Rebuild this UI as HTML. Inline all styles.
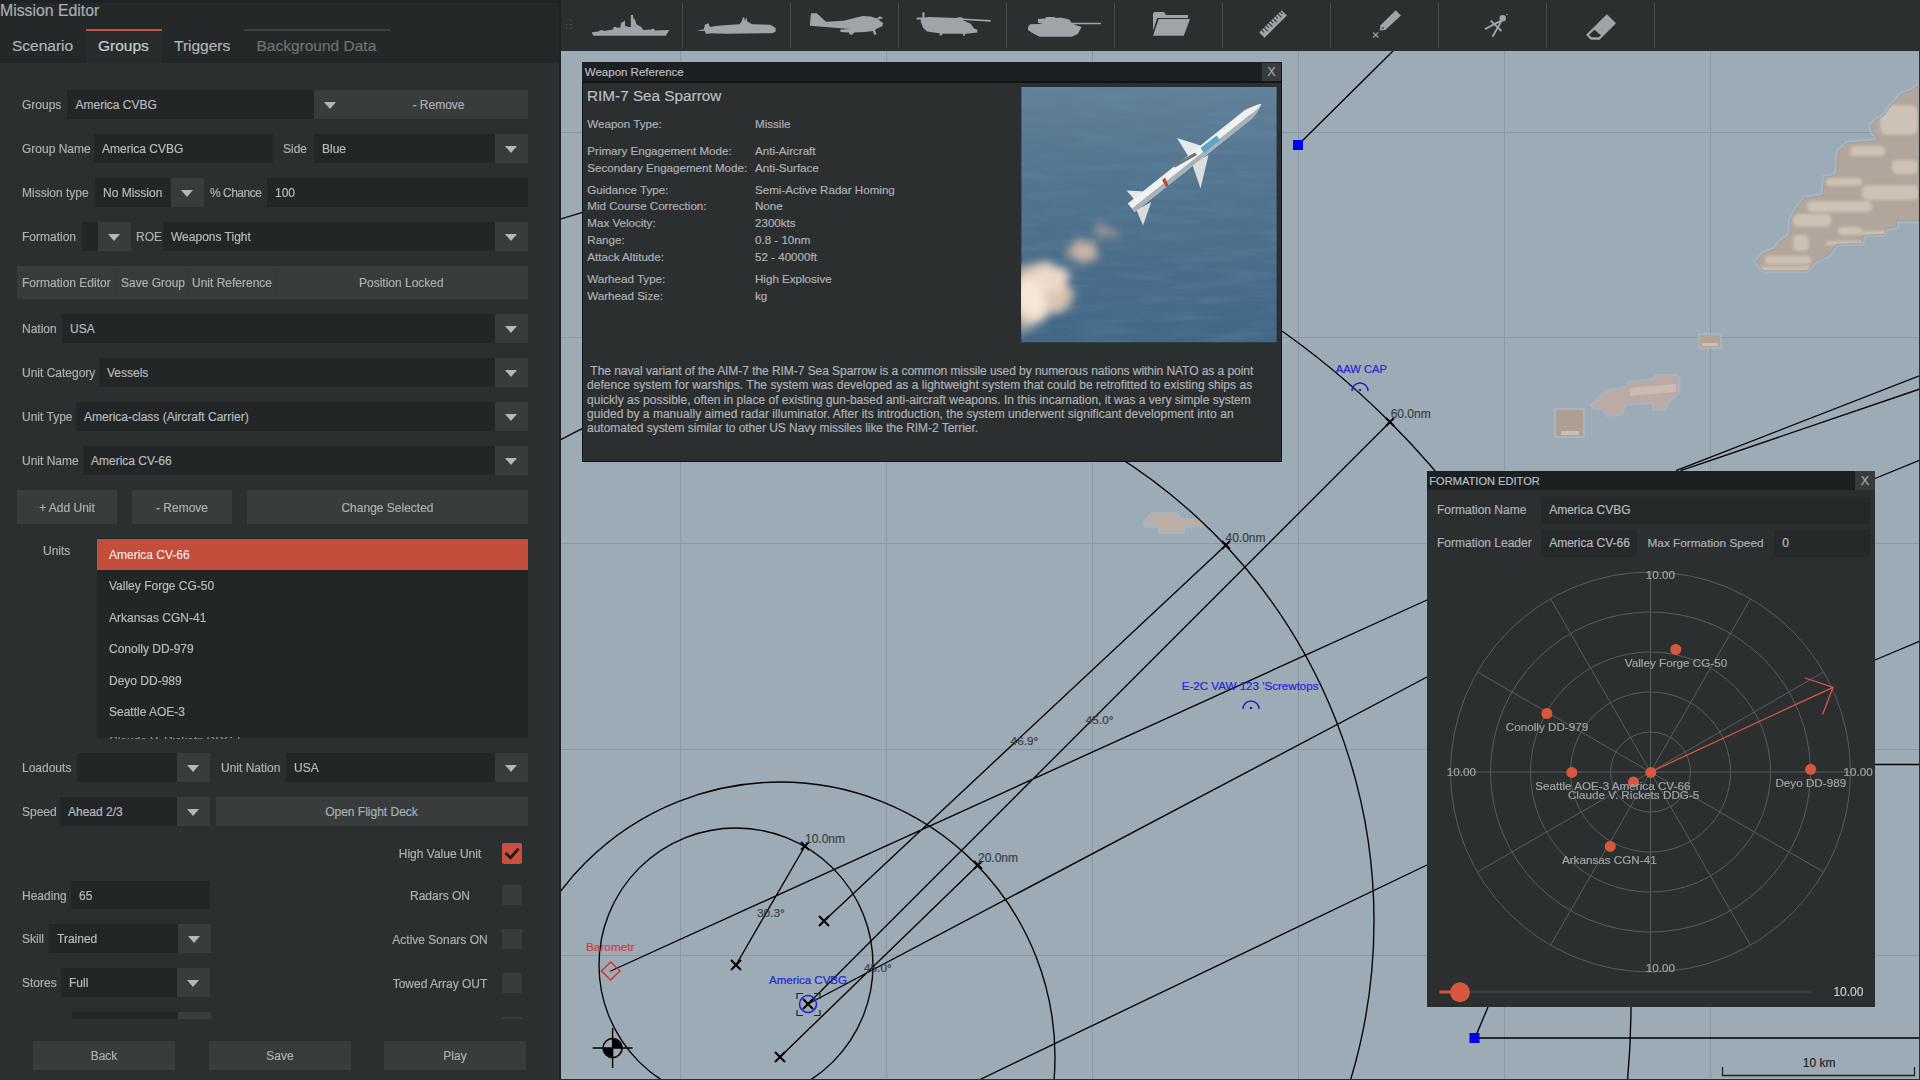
<!DOCTYPE html>
<html><head><meta charset="utf-8">
<style>
*{margin:0;padding:0;box-sizing:border-box}
html,body{width:1920px;height:1080px;overflow:hidden;background:#9dabb7;font-family:"Liberation Sans",sans-serif}
.a{position:absolute}
#left{position:absolute;left:0;top:0;width:561px;height:1080px;background:#2b2f30}
#hdr{position:absolute;left:0;top:0;width:560px;height:63px;background:linear-gradient(#1f2224 0,#1f2224 2.5px,#242829 3px,#242829 58px,#222627 60px,#222627 63px)}
.t{position:absolute;white-space:nowrap;color:#abafb2;font-size:12px;-webkit-text-stroke:0.2px currentColor}
.in{position:absolute;background:#232627}
.bt{position:absolute;background:#383c3d}
.arr{position:absolute;width:0;height:0;border-left:6.5px solid transparent;border-right:6.5px solid transparent;border-top:7px solid #b3b7ba}
#map{position:absolute;left:561px;top:51px;width:1359px;height:1029px;background:#9dabb7;overflow:hidden}
#tb{position:absolute;left:561px;top:0;width:1359px;height:51px;background:#2b2f30}
.sep{position:absolute;top:3px;width:1px;height:44px;background:#43474a}

</style></head><body>
<div id="map"><svg class="a" style="left:-561px;top:-51px" width="1920" height="1080" viewBox="0 0 1920 1080">
<defs><radialGradient id="g1"><stop offset="0" stop-color="#a3b0bc" stop-opacity="0.8"/><stop offset="1" stop-color="#a3b0bc" stop-opacity="0"/></radialGradient><radialGradient id="g2"><stop offset="0" stop-color="#95a3b0" stop-opacity="0.7"/><stop offset="1" stop-color="#95a3b0" stop-opacity="0"/></radialGradient></defs>
<path d="M680.5 51V1080 M886.5 51V1080 M1092.5 51V1080 M1298.5 51V1080 M1504.5 51V1080 M1710.5 51V1080 M561 132.5H1920 M561 337.5H1920 M561 543.5H1920 M561 749.5H1920 M561 955.5H1920" stroke="#8b98a4" stroke-width="1" fill="none"/>
<polygon points="1918,85.6 1910.6,91.1 1901.3,93.9 1894.8,102.2 1889.3,107.8 1884.6,115.2 1874.4,121.7 1871.7,124.4 1871.7,131.9 1876.3,135.6 1877.2,141.1 1847.6,143 1838.3,151.3 1836.5,175.4 1824.3,177.1 1823.3,195.5 1805,198 1797.9,206.7 1790.7,219.9 1789.7,235.2 1780.5,241.3 1774.4,249.4 1763.2,253.5 1756.1,261.6 1763.2,270.8 1807,270.8 1815.2,261.6 1828.4,255.5 1836.6,244.3 1862,243.3 1863,235.2 1884.4,234.2 1886.5,228 1896.6,227 1896.6,220.9 1919,220.9" fill="none" stroke="#a6b9cb" stroke-width="5" stroke-linejoin="round" opacity="0.75"/>
<polygon points="1918,85.6 1910.6,91.1 1901.3,93.9 1894.8,102.2 1889.3,107.8 1884.6,115.2 1874.4,121.7 1871.7,124.4 1871.7,131.9 1876.3,135.6 1877.2,141.1 1847.6,143 1838.3,151.3 1836.5,175.4 1824.3,177.1 1823.3,195.5 1805,198 1797.9,206.7 1790.7,219.9 1789.7,235.2 1780.5,241.3 1774.4,249.4 1763.2,253.5 1756.1,261.6 1763.2,270.8 1807,270.8 1815.2,261.6 1828.4,255.5 1836.6,244.3 1862,243.3 1863,235.2 1884.4,234.2 1886.5,228 1896.6,227 1896.6,220.9 1919,220.9" fill="#b2a69c"/>
<clipPath id="bigclip"><polygon points="1918,85.6 1910.6,91.1 1901.3,93.9 1894.8,102.2 1889.3,107.8 1884.6,115.2 1874.4,121.7 1871.7,124.4 1871.7,131.9 1876.3,135.6 1877.2,141.1 1847.6,143 1838.3,151.3 1836.5,175.4 1824.3,177.1 1823.3,195.5 1805,198 1797.9,206.7 1790.7,219.9 1789.7,235.2 1780.5,241.3 1774.4,249.4 1763.2,253.5 1756.1,261.6 1763.2,270.8 1807,270.8 1815.2,261.6 1828.4,255.5 1836.6,244.3 1862,243.3 1863,235.2 1884.4,234.2 1886.5,228 1896.6,227 1896.6,220.9 1919,220.9"/></clipPath><filter id="ib" x="-10%" y="-10%" width="120%" height="120%"><feGaussianBlur stdDeviation="1.6"/></filter>
<g clip-path="url(#bigclip)"><g filter="url(#ib)" fill="#cec1b6"><rect x="1807" y="201" width="65" height="11" rx="5"/><rect x="1793" y="214" width="38" height="13" rx="5"/><rect x="1838" y="227" width="24" height="8" rx="4"/><rect x="1765" y="256" width="46" height="8" rx="3"/><rect x="1760" y="266.5" width="50" height="5"/><rect x="1793" y="235" width="16" height="16" rx="5"/><rect x="1862" y="185" width="57" height="15" rx="6"/><rect x="1826" y="178" width="36" height="8" rx="4"/><rect x="1880" y="105" width="38" height="30" rx="8"/><rect x="1850" y="146" width="35" height="10" rx="4"/><rect x="1892" y="160" width="26" height="14" rx="5"/><rect x="1826" y="241" width="40" height="4"/><rect x="1862" y="231" width="34" height="5"/></g></g>
<polygon points="1918,85.6 1910.6,91.1 1901.3,93.9 1894.8,102.2 1889.3,107.8 1884.6,115.2 1874.4,121.7 1871.7,124.4 1871.7,131.9 1876.3,135.6 1877.2,141.1 1847.6,143 1838.3,151.3 1836.5,175.4 1824.3,177.1 1823.3,195.5 1805,198 1797.9,206.7 1790.7,219.9 1789.7,235.2 1780.5,241.3 1774.4,249.4 1763.2,253.5 1756.1,261.6 1763.2,270.8 1807,270.8 1815.2,261.6 1828.4,255.5 1836.6,244.3 1862,243.3 1863,235.2 1884.4,234.2 1886.5,228 1896.6,227 1896.6,220.9 1919,220.9" fill="none" stroke="#9f9289" stroke-width="1" opacity="0.6"/>
<polygon points="1591.7,405.4 1607.4,391 1627.8,387.4 1629,382.6 1653,380 1656.7,376 1676,376 1678.4,379 1678.4,392.2 1667.6,401.8 1665,409 1654.3,409 1653,401.8 1624,404 1621.8,413.9 1607.4,415 1603.8,409 1594,407.8" fill="#bcaaa4" stroke="#a9b9c8" stroke-width="4" stroke-linejoin="miter" stroke-opacity="0.7"/><polygon points="1591.7,405.4 1607.4,391 1627.8,387.4 1629,382.6 1653,380 1656.7,376 1676,376 1678.4,379 1678.4,392.2 1667.6,401.8 1665,409 1654.3,409 1653,401.8 1624,404 1621.8,413.9 1607.4,415 1603.8,409 1594,407.8" fill="#bcaaa4"/>
<path d="M1630 388 L1676 384 L1676 392 L1630 396Z" fill="#d7c3bd" opacity="0.6"/>
<polygon points="1556,410 1583,410 1583,436 1556,436" fill="#ad9f92" stroke="#a9b9c8" stroke-width="4" stroke-linejoin="miter" stroke-opacity="0.7"/><polygon points="1556,410 1583,410 1583,436 1556,436" fill="#ad9f92"/>
<rect x="1561" y="431" width="18" height="4" fill="#cdbeaf"/>
<polygon points="1700,335 1720,335 1720,347 1700,347" fill="#b3a596" stroke="#a9b9c8" stroke-width="4" stroke-linejoin="miter" stroke-opacity="0.7"/><polygon points="1700,335 1720,335 1720,347 1700,347" fill="#b3a596"/>
<rect x="1702" y="343" width="16" height="3" fill="#cdbeaf"/>
<polygon points="1152,514 1176,514 1179.2,519.7 1201.3,520.6 1201.7,525.3 1183.4,526.3 1183,531.9 1160,531.9 1159.5,526.3 1145.5,525.3 1144.5,522.5" fill="#bcaea3" stroke="#a9b9c8" stroke-width="4" stroke-linejoin="miter" stroke-opacity="0.7"/><polygon points="1152,514 1176,514 1179.2,519.7 1201.3,520.6 1201.7,525.3 1183.4,526.3 1183,531.9 1160,531.9 1159.5,526.3 1145.5,525.3 1144.5,522.5" fill="#bcaea3"/>
<circle cx="736" cy="965" r="137" fill="none" stroke="#000" stroke-width="1.35"/>
<circle cx="780" cy="1057" r="275" fill="none" stroke="#000" stroke-width="1.35"/>
<circle cx="825" cy="921" r="549" fill="none" stroke="#000" stroke-width="1.35"/>
<circle cx="808" cy="1004" r="823" fill="none" stroke="#000" stroke-width="1.35"/>
<path d="M736 965L805 846 M824 921L1226 545 M780 1057L978 865 M808 1004L1390 422 M610.7 971L1427 600 M808 1004L1427 677 M979 1080L1427 865 M1676 470.6L1920 375.6 M1680.6 470.6L1920 389 M1875 478.5L1920 460 M1875 660L1920 641 M1875 764.5L1920 764.5 M1298 145L1393 51 M1475 1038L1920 1038 M1475 1038L1488 1007" stroke="#000" stroke-width="1.35" fill="none"/>
<path d="M731 960L741 970M741 960L731 970" stroke="#000" stroke-width="2"/>
<path d="M819 916L829 926M829 916L819 926" stroke="#000" stroke-width="2"/>
<path d="M775 1052L785 1062M785 1052L775 1062" stroke="#000" stroke-width="2"/>
<path d="M803 999L813 1009M813 999L803 1009" stroke="#000" stroke-width="2"/>
<path d="M801 842L809 850M809 842L801 850" stroke="#000" stroke-width="1.8"/>
<path d="M974 861L982 869M982 861L974 869" stroke="#000" stroke-width="1.8"/>
<path d="M1222 541L1230 549M1230 541L1222 549" stroke="#000" stroke-width="1.8"/>
<path d="M1386 418L1394 426M1394 418L1386 426" stroke="#000" stroke-width="1.8"/>
<rect x="1293" y="140" width="10" height="10" fill="#0000ee"/>
<rect x="1469.5" y="1033" width="10" height="10" fill="#0000ee"/>
<circle cx="808" cy="1004" r="8.5" fill="none" stroke="#1f1fd0" stroke-width="1.5"/>
<path d="M797 999V993.5H803M814 993.5H820V999M820 1010V1015.5H814M803 1015.5H797V1010" stroke="#1c2530" stroke-width="1.2" fill="none"/>
<path d="M610.7 962L620 971L610.7 980L601.4 971Z" fill="none" stroke="#d03030" stroke-width="1.4"/>
<circle cx="610.7" cy="971" r="1.2" fill="#d03030"/>
<circle cx="612.6" cy="1048" r="9.5" fill="none" stroke="#000" stroke-width="1.6"/>
<path d="M612.6 1048V1039A9 9 0 0 1 621.6 1048Z M612.6 1048V1057A9 9 0 0 1 603.6 1048Z" fill="#000"/>
<path d="M592.6 1048H632.6M612.6 1028V1068" stroke="#000" stroke-width="1.4"/>
<path d="M1352 391A8 8 0 0 1 1368 391" fill="none" stroke="#1f1fd0" stroke-width="1.5"/><circle cx="1360" cy="390" r="1.2" fill="#1f1fd0"/>
<path d="M1243 709A8 8 0 0 1 1259 709" fill="none" stroke="#1f1fd0" stroke-width="1.5"/><circle cx="1251" cy="708" r="1.3" fill="#1f1fd0"/>
<path d="M1722.5 1067V1075.5H1914.5V1067" stroke="#222" stroke-width="1.3" fill="none"/>
</svg>
<div class="t" style="left:244px;top:780px;height:16px;line-height:16px;font-size:12px;color:#3b4045">10.0nm</div>
<div class="t" style="left:417px;top:799px;height:16px;line-height:16px;font-size:12px;color:#3b4045">20.0nm</div>
<div class="t" style="left:664.5px;top:479px;height:16px;line-height:16px;font-size:12px;color:#3b4045">40.0nm</div>
<div class="t" style="left:829.7px;top:355px;height:16px;line-height:16px;font-size:12px;color:#3b4045">60.0nm</div>
<div class="t" style="left:196px;top:854px;height:16px;line-height:16px;font-size:11.8px;color:#3b4045">30.3°</div>
<div class="t" style="left:449.6px;top:682px;height:16px;line-height:16px;font-size:11.8px;color:#3b4045">46.9°</div>
<div class="t" style="left:524.8px;top:661px;height:16px;line-height:16px;font-size:11.8px;color:#3b4045">45.0°</div>
<div class="t" style="left:303px;top:909px;height:16px;line-height:16px;font-size:11.8px;color:#3b4045">45.0°</div>
<div class="t" style="left:620.7px;top:627px;height:16px;line-height:16px;font-size:11.6px;color:#2424d8">E-2C VAW 123 'Screwtops'</div>
<div class="t" style="left:208px;top:921px;height:16px;line-height:16px;font-size:11.5px;color:#2424d8">America CVBG</div>
<div class="t" style="left:774.8px;top:310px;height:16px;line-height:16px;font-size:11.2px;color:#2424d8">AAW CAP</div>
<div class="t" style="left:25px;top:888px;height:16px;line-height:16px;font-size:11.8px;color:#d43a3a">Barometr</div>
<div class="t" style="left:1241.8px;top:1004px;height:16px;line-height:16px;font-size:12px;color:#222">10 km</div>
<div class="a" style="left:1358px;top:0;width:1px;height:1029px;background:#2b2f30"></div>
<div class="a" style="left:0;top:1028px;width:1359px;height:1px;background:#2b2f30"></div></div>
<div id="tb"><div class="a" style="left:120.9px;top:3px;width:1px;height:45px;background:#474b4e"></div>
<div class="a" style="left:228.9px;top:3px;width:1px;height:45px;background:#474b4e"></div>
<div class="a" style="left:336.9px;top:3px;width:1px;height:45px;background:#474b4e"></div>
<div class="a" style="left:445.0px;top:3px;width:1px;height:45px;background:#474b4e"></div>
<div class="a" style="left:553.0px;top:3px;width:1px;height:45px;background:#474b4e"></div>
<div class="a" style="left:661.0px;top:3px;width:1px;height:45px;background:#474b4e"></div>
<div class="a" style="left:769.0px;top:3px;width:1px;height:45px;background:#474b4e"></div>
<div class="a" style="left:877.0px;top:3px;width:1px;height:45px;background:#474b4e"></div>
<div class="a" style="left:985.1px;top:3px;width:1px;height:45px;background:#474b4e"></div>
<div class="a" style="left:1093.1px;top:3px;width:1px;height:45px;background:#474b4e"></div>
<div class="a" style="left:4.9px;top:19.7px;width:1.6px;height:1.6px;background:#4d5154"></div>
<div class="a" style="left:4.9px;top:23.6px;width:1.6px;height:1.6px;background:#4d5154"></div>
<div class="a" style="left:4.9px;top:27.5px;width:1.6px;height:1.6px;background:#4d5154"></div>
<div class="a" style="left:9.2px;top:19.7px;width:1.6px;height:1.6px;background:#4d5154"></div>
<div class="a" style="left:9.2px;top:23.6px;width:1.6px;height:1.6px;background:#4d5154"></div>
<div class="a" style="left:9.2px;top:27.5px;width:1.6px;height:1.6px;background:#4d5154"></div>
<svg class="a" style="left:24px;top:5px" width="200" height="40" viewBox="0 0 1920 384"><path fill="#9fa4a9" d="M65 262 L130 255 L140 245 L170 240 L180 250 L270 235 L275 210 L300 210 L300 218 L340 215 L345 180 L355 165 L370 160 L380 145 L385 180 L385 200 L415 212 L440 212 L440 95 L460 95 L465 130 L480 140 L490 175 L500 190 L540 210 L560 240 L640 235 L650 225 L665 230 L670 245 L810 240 L775 295 L80 295 Z"/><path fill="#9fa4a9" d="M1085 240 L1140 235 L1150 190 L1185 175 L1200 210 L1240 205 L1330 195 L1480 185 L1500 165 L1510 140 L1515 120 L1530 120 L1535 150 L1550 120 L1560 160 L1590 175 L1600 185 L1780 190 L1830 220 L1830 255 L1800 270 L1360 275 L1200 270 L1190 275 L1160 275 L1150 250 L1085 245 Z"/></svg>
<svg class="a" style="left:239px;top:5px" width="200" height="40" viewBox="0 0 1920 384"><path fill="#9fa4a9" d="M95 195 L105 80 L160 80 L250 160 L420 150 L600 105 L680 110 L740 130 L760 110 L790 115 L790 130 L750 140 L800 175 L790 205 L740 225 L720 240 L735 280 L710 285 L700 250 L620 260 L520 265 L500 285 L480 285 L470 265 L390 260 L385 235 L480 230 L95 200 Z"/><path fill="#9fa4a9" d="M1120 120 L1175 120 L1175 70 L1195 70 L1195 120 L1240 115 L1500 125 L1525 118 L1550 118 L1570 130 L1830 145 L1830 160 L1560 145 L1640 180 L1670 225 L1700 235 L1705 265 L1590 275 L1580 295 L1565 295 L1565 275 L1370 275 L1355 295 L1340 290 L1340 270 L1220 255 L1180 215 L1160 160 L1160 140 L1120 140 Z"/></svg>
<svg class="a" style="left:454px;top:5px" width="200" height="40" viewBox="0 0 1920 384"><path fill="#9fa4a9" d="M125 210 L145 185 L270 180 L220 170 L220 135 L290 130 L300 115 L380 115 L390 125 L440 120 L520 140 L545 170 L825 170 L825 185 L560 185 L640 210 L600 280 L545 305 L235 305 L150 260 L125 240 Z"/><path fill="#9fa4a9" d="M1325 80 L1340 68 L1430 68 L1450 95 L1660 95 L1660 125 L1365 125 L1330 235 L1325 235 Z M1380 135 L1680 135 L1620 295 L1325 295 Z"/></svg>
<svg class="a" style="left:679px;top:5px" width="200" height="40" viewBox="0 0 1920 384"><path fill="#9fa4a9" d="M185 265 L400 50 L450 100 L235 315 Z"/><path d="M210 240 l22 22" stroke="#2b2e31" stroke-width="10"/><path d="M232 218 l34 34" stroke="#2b2e31" stroke-width="10"/><path d="M254 196 l22 22" stroke="#2b2e31" stroke-width="10"/><path d="M276 174 l34 34" stroke="#2b2e31" stroke-width="10"/><path d="M298 152 l22 22" stroke="#2b2e31" stroke-width="10"/><path d="M320 130 l34 34" stroke="#2b2e31" stroke-width="10"/><path d="M342 108 l22 22" stroke="#2b2e31" stroke-width="10"/><path d="M364 86 l34 34" stroke="#2b2e31" stroke-width="10"/><path d="M386 64 l22 22" stroke="#2b2e31" stroke-width="10"/><path fill="#9fa4a9" d="M1340 245 L1350 195 L1495 50 L1545 100 L1395 240 Z"/><path d="M1352 232 L1375 210 L1385 222 Z" fill="#2b2e31"/><path d="M1278 262 L1328 312 M1328 262 L1278 312" stroke="#9fa4a9" stroke-width="11"/></svg>
<svg class="a" style="left:899px;top:5px" width="200" height="40" viewBox="0 0 1920 384"><circle cx="410" cy="128" r="31" fill="#9fa4a9"/><path d="M445 95 L455 88" stroke="#9fa4a9" stroke-width="12"/><path d="M395 150 L240 232 M400 150 L312 305 M295 150 L398 250" stroke="#9fa4a9" stroke-width="18"/><path fill="#9fa4a9" d="M1210 285 L1410 88 L1498 175 L1340 333 L1255 333 Z"/><path fill="#2b2e31" d="M1240 287 L1290 237 L1352 290 L1332 310 L1262 310 Z"/></svg></div>
<div class="a" style="left:0;top:0;width:1920px;height:1080px"><div class="a" style="left:581.5px;top:61.5px;width:700.0px;height:400.0px;background:#2b2f30;border:1px solid #141618"></div>
<div class="a" style="left:582px;top:62px;width:699px;height:20px;background:#1d2022"></div>
<div class="a" style="left:582px;top:81px;width:699px;height:1.5px;background:#121416"></div>
<div class="a" style="left:1262px;top:63px;width:19px;height:18px;background:#393c3f"></div>
<div class="t" style="left:1262px;top:63px;height:18px;line-height:18px;width:19px;text-align:center;font-size:12px;color:#a4a8ab">X</div>
<div class="t" style="left:584.8px;top:63px;height:18px;line-height:18px;font-size:11.5px;color:#b9bdc0">Weapon Reference</div>
<div class="t" style="left:587px;top:87px;height:18px;line-height:18px;font-size:15.3px;color:#babec1">RIM-7 Sea Sparrow</div>
<div class="t" style="left:587.3px;top:117.0px;height:14px;line-height:14px;font-size:11.6px;color:#adb1b4">Weapon Type:</div>
<div class="t" style="left:755px;top:117.0px;height:14px;line-height:14px;font-size:11.6px;color:#adb1b4">Missile</div>
<div class="t" style="left:587.3px;top:144.0px;height:14px;line-height:14px;font-size:11.6px;color:#adb1b4">Primary Engagement Mode:</div>
<div class="t" style="left:755px;top:144.0px;height:14px;line-height:14px;font-size:11.6px;color:#adb1b4">Anti-Aircraft</div>
<div class="t" style="left:587.3px;top:160.9px;height:14px;line-height:14px;font-size:11.6px;color:#adb1b4">Secondary Engagement Mode:</div>
<div class="t" style="left:755px;top:160.9px;height:14px;line-height:14px;font-size:11.6px;color:#adb1b4">Anti-Surface</div>
<div class="t" style="left:587.3px;top:182.8px;height:14px;line-height:14px;font-size:11.6px;color:#adb1b4">Guidance Type:</div>
<div class="t" style="left:755px;top:182.8px;height:14px;line-height:14px;font-size:11.6px;color:#adb1b4">Semi-Active Radar Homing</div>
<div class="t" style="left:587.3px;top:199.4px;height:14px;line-height:14px;font-size:11.6px;color:#adb1b4">Mid Course Correction:</div>
<div class="t" style="left:755px;top:199.4px;height:14px;line-height:14px;font-size:11.6px;color:#adb1b4">None</div>
<div class="t" style="left:587.3px;top:216.4px;height:14px;line-height:14px;font-size:11.6px;color:#adb1b4">Max Velocity:</div>
<div class="t" style="left:755px;top:216.4px;height:14px;line-height:14px;font-size:11.6px;color:#adb1b4">2300kts</div>
<div class="t" style="left:587.3px;top:233.1px;height:14px;line-height:14px;font-size:11.6px;color:#adb1b4">Range:</div>
<div class="t" style="left:755px;top:233.1px;height:14px;line-height:14px;font-size:11.6px;color:#adb1b4">0.8 - 10nm</div>
<div class="t" style="left:587.3px;top:250.0px;height:14px;line-height:14px;font-size:11.6px;color:#adb1b4">Attack Altitude:</div>
<div class="t" style="left:755px;top:250.0px;height:14px;line-height:14px;font-size:11.6px;color:#adb1b4">52 - 40000ft</div>
<div class="t" style="left:587.3px;top:272.1px;height:14px;line-height:14px;font-size:11.6px;color:#adb1b4">Warhead Type:</div>
<div class="t" style="left:755px;top:272.1px;height:14px;line-height:14px;font-size:11.6px;color:#adb1b4">High Explosive</div>
<div class="t" style="left:587.3px;top:288.8px;height:14px;line-height:14px;font-size:11.6px;color:#adb1b4">Warhead Size:</div>
<div class="t" style="left:755px;top:288.8px;height:14px;line-height:14px;font-size:11.6px;color:#adb1b4">kg</div>
<div class="t" style="left:587.1px;top:364.0px;height:14px;line-height:14px;font-size:12px;color:#adb1b4;letter-spacing:-0.053px">&nbsp;The naval variant of the AIM-7 the RIM-7 Sea Sparrow is a common missile used by numerous nations within NATO as a point</div>
<div class="t" style="left:587.1px;top:378.4px;height:14px;line-height:14px;font-size:12px;color:#adb1b4;letter-spacing:0.024px">defence system for warships. The system was developed as a lightweight system that could be retrofitted to existing ships as</div>
<div class="t" style="left:587.1px;top:392.7px;height:14px;line-height:14px;font-size:12px;color:#adb1b4;letter-spacing:0px">quickly as possible, often in place of existing gun-based anti-aircraft weapons. In this incarnation, it was a very simple system</div>
<div class="t" style="left:587.1px;top:407.1px;height:14px;line-height:14px;font-size:12px;color:#adb1b4;letter-spacing:0.034px">guided by a manually aimed radar illuminator. After its introduction, the system underwent significant development into an</div>
<div class="t" style="left:587.1px;top:421.4px;height:14px;line-height:14px;font-size:12px;color:#adb1b4;letter-spacing:-0.04px">automated system similar to other US Navy missiles like the RIM-2 Terrier.</div>
<svg class="a" style="left:1015px;top:80px" width="270" height="270" viewBox="0 0 1080 1080">
<defs>
<linearGradient id="sea" x1="0" y1="0" x2="0" y2="1"><stop offset="0" stop-color="#62819a"/><stop offset="0.3" stop-color="#557690"/><stop offset="0.7" stop-color="#4a6d8b"/><stop offset="1" stop-color="#426786"/></linearGradient>
<radialGradient id="sm1"><stop offset="0" stop-color="#f4e2cc"/><stop offset="0.55" stop-color="#e6c2a2" stop-opacity="0.85"/><stop offset="1" stop-color="#b99888" stop-opacity="0"/></radialGradient>
<radialGradient id="sm2"><stop offset="0" stop-color="#e8c4aa"/><stop offset="0.6" stop-color="#d2ab98" stop-opacity="0.7"/><stop offset="1" stop-color="#a88c86" stop-opacity="0"/></radialGradient>
<filter id="wv" x="0" y="0" width="1" height="1"><feTurbulence type="fractalNoise" baseFrequency="0.004 0.03" numOctaves="3" seed="4"/><feColorMatrix values="0 0 0 0 0.15  0 0 0 0 0.3  0 0 0 0 0.42  0 0 0 -1.6 1.0"/></filter>
<clipPath id="imgc"><rect x="25" y="28" width="1022" height="1022"/></clipPath>
<filter id="cl" x="-50%" y="-50%" width="200%" height="200%"><feTurbulence type="fractalNoise" baseFrequency="0.025" numOctaves="3" seed="7" result="n"/><feDisplacementMap in="SourceGraphic" in2="n" scale="70" xChannelSelector="R" yChannelSelector="G"/><feGaussianBlur stdDeviation="16"/></filter>
</defs>
<g clip-path="url(#imgc)">
<rect x="25" y="28" width="1022" height="1022" fill="url(#sea)"/>
<rect x="25" y="28" width="1022" height="1022" filter="url(#wv)" opacity="0.35"/>
<g filter="url(#cl)">
<ellipse cx="110" cy="840" rx="120" ry="110" fill="#e9cdb5" opacity="0.9"/>
<ellipse cx="60" cy="880" rx="70" ry="95" fill="#f6e6d6"/>
<ellipse cx="150" cy="790" rx="70" ry="55" fill="#f0dccb" opacity="0.9"/>
<ellipse cx="270" cy="685" rx="60" ry="40" fill="#e3c0aa" opacity="0.85"/>
<ellipse cx="360" cy="610" rx="40" ry="25" fill="#d7b3a2" opacity="0.6"/>
<ellipse cx="40" cy="975" rx="40" ry="35" fill="#d8c0b0" opacity="0.6"/>
</g>
<path d="M648 232 L755 266 L700 316 Z" fill="#e6e9eb"/>
<path d="M708 334 L774 300 L742 434 Z" fill="#dadee1"/>
<path d="M446 442 L524 446 L492 494 Z" fill="#e4e7e9"/>
<path d="M486 520 L545 488 L512 582 Z" fill="#d8dcdf"/>
<path d="M451 494 L920 120 Q960 100 986 95 Q975 125 948 154 L479 528 Z" fill="#f0f1f2"/>
<path d="M468 514 L938 140 Q968 122 986 95 Q975 125 948 154 L479 528 Z" fill="#a9b1b7"/>
<path d="M630 340 L720 290 L728 300 L640 350 Z" fill="#6f777d"/>
<path d="M742 272 L806 222 L820 240 L756 292 Z" fill="#5ba6c6"/>
<path d="M588 400 L600 390 L614 422 L604 428 Z" fill="#b0503a"/>
</g>
</svg>
<div class="a" style="left:1426.6px;top:470.8px;width:448.4000000000001px;height:536.2px;background:#2b2f30"></div>
<div class="a" style="left:1426.6px;top:470.8px;width:448.4000000000001px;height:19.69999999999999px;background:#1d2022"></div>
<div class="a" style="left:1855px;top:470.8px;width:20px;height:19.69999999999999px;background:#393c3f"></div>
<div class="t" style="left:1855px;top:472px;height:18px;line-height:18px;width:20px;text-align:center;font-size:12.5px;color:#a4a8ab">X</div>
<div class="t" style="left:1429.3px;top:472px;height:18px;line-height:18px;font-size:11.1px;color:#b9bdc0">FORMATION EDITOR</div>
<div class="a" style="left:1541px;top:496.5px;width:329px;height:27.0px;background:#26292a"></div>
<div class="t" style="left:1437px;top:496.5px;height:27px;line-height:27px;font-size:12px;color:#adb1b4">Formation Name</div>
<div class="t" style="left:1549.2px;top:496.5px;height:27px;line-height:27px;font-size:12px;color:#b6b9bc">America CVBG</div>
<div class="a" style="left:1541px;top:529.5px;width:95.5px;height:27.5px;background:#26292a"></div>
<div class="a" style="left:1773.9px;top:529.5px;width:96.09999999999991px;height:27.5px;background:#26292a"></div>
<div class="t" style="left:1437px;top:529.5px;height:27.5px;line-height:27.5px;font-size:12px;color:#adb1b4">Formation Leader</div>
<div class="t" style="left:1549.2px;top:529.5px;height:27.5px;line-height:27.5px;font-size:12px;color:#b6b9bc">America CV-66</div>
<div class="t" style="left:1647.5px;top:529.5px;height:27.5px;line-height:27.5px;font-size:11.8px;color:#adb1b4">Max Formation Speed</div>
<div class="t" style="left:1782.3px;top:529.5px;height:27.5px;line-height:27.5px;font-size:12px;color:#b6b9bc">0</div>
<svg class="a" style="left:0;top:0" width="1920" height="1080" viewBox="0 0 1920 1080">
<circle cx="1650.5" cy="772" r="40" fill="none" stroke="#595d60" stroke-width="1"/>
<circle cx="1650.5" cy="772" r="80" fill="none" stroke="#595d60" stroke-width="1"/>
<circle cx="1650.5" cy="772" r="120" fill="none" stroke="#595d60" stroke-width="1"/>
<circle cx="1650.5" cy="772" r="160" fill="none" stroke="#595d60" stroke-width="1"/>
<circle cx="1650.5" cy="772" r="200" fill="none" stroke="#595d60" stroke-width="1"/>
<path d="M1650.5 772L1850.5 772.0 M1650.5 772L1823.7 672.0 M1650.5 772L1750.5 598.8 M1650.5 772L1650.5 572.0 M1650.5 772L1550.5 598.8 M1650.5 772L1477.3 672.0 M1650.5 772L1450.5 772.0 M1650.5 772L1477.3 872.0 M1650.5 772L1550.5 945.2 M1650.5 772L1650.5 972.0 M1650.5 772L1750.5 945.2 M1650.5 772L1823.7 872.0" stroke="#595d60" stroke-width="1" fill="none"/>
<path d="M1650.5 772L1833 687.3M1805 678L1833 687.3L1822.6 714.4" stroke="#d9573f" stroke-width="1.3" fill="none"/>
<circle cx="1675.8" cy="649.4" r="5.5" fill="#d9573f"/>
<circle cx="1546.9" cy="713.5" r="5.5" fill="#d9573f"/>
<circle cx="1571.8" cy="772.4" r="5.5" fill="#d9573f"/>
<circle cx="1650.8" cy="772.4" r="5.5" fill="#d9573f"/>
<circle cx="1633.5" cy="781.9" r="5.5" fill="#d9573f"/>
<circle cx="1810.7" cy="769.3" r="5.5" fill="#d9573f"/>
<circle cx="1610.2" cy="846.4" r="5.5" fill="#d9573f"/>
<rect x="1468" y="990.5" width="344" height="2.5" fill="#3a3e41"/>
<rect x="1439.5" y="990.5" width="20" height="3" fill="#d9573f"/>
<circle cx="1460" cy="992.3" r="10" fill="#d9573f"/>
</svg>
<div class="t" style="left:1560.3px;top:567px;height:16px;line-height:16px;width:200px;text-align:center;font-size:11.7px;color:#a0a4a7">10.00</div>
<div class="t" style="left:1361.4px;top:763.5px;height:16px;line-height:16px;width:200px;text-align:center;font-size:11.7px;color:#a0a4a7">10.00</div>
<div class="t" style="left:1758.2px;top:763.5px;height:16px;line-height:16px;width:200px;text-align:center;font-size:11.7px;color:#a0a4a7">10.00</div>
<div class="t" style="left:1560.4px;top:960.3px;height:16px;line-height:16px;width:200px;text-align:center;font-size:11.7px;color:#a0a4a7">10.00</div>
<div class="t" style="left:1576.0px;top:654.8px;height:16px;line-height:16px;width:200px;text-align:center;font-size:11.7px;color:#a0a4a7">Valley Forge CG-50</div>
<div class="t" style="left:1447.0px;top:718.7px;height:16px;line-height:16px;width:200px;text-align:center;font-size:11.7px;color:#a0a4a7">Conolly DD-979</div>
<div class="t" style="left:1512.8px;top:777.7px;height:16px;line-height:16px;width:200px;text-align:center;font-size:11.7px;color:#a0a4a7">Seattle AOE-3 America CV-66</div>
<div class="t" style="left:1533.6px;top:787.1px;height:16px;line-height:16px;width:200px;text-align:center;font-size:11.7px;color:#a0a4a7">Claude V. Rickets DDG-5</div>
<div class="t" style="left:1710.8px;top:774.5px;height:16px;line-height:16px;width:200px;text-align:center;font-size:11.7px;color:#a0a4a7">Deyo DD-989</div>
<div class="t" style="left:1509.3px;top:851.6px;height:16px;line-height:16px;width:200px;text-align:center;font-size:11.7px;color:#a0a4a7">Arkansas CGN-41</div>
<div class="t" style="left:1833.4px;top:984px;height:16px;line-height:16px;font-size:12px;color:#c6c9cc">10.00</div></div>
<div id="left">
<div id="hdr"></div>
<div class="t" style="left:0px;top:3px;height:16px;line-height:16px;font-size:15.8px;color:#a9adb0">Mission Editor</div>
<div class="a" style="left:86px;top:29px;width:76px;height:34px;background:#282c2d"></div>
<div class="a" style="left:86px;top:29px;width:76px;height:2px;background:#c4533f"></div>
<div class="a" style="left:244px;top:29px;width:146px;height:2px;background:#3b3f42"></div>
<div class="t" style="left:12px;top:31px;height:30px;line-height:30px;font-size:15.5px;color:#b0b4b7">Scenario</div>
<div class="t" style="left:98px;top:31px;height:30px;line-height:30px;font-size:15.5px;color:#c8cbce">Groups</div>
<div class="t" style="left:174px;top:31px;height:30px;line-height:30px;font-size:15.5px;color:#b0b4b7">Triggers</div>
<div class="t" style="left:256.5px;top:31px;height:30px;line-height:30px;font-size:15.5px;color:#6e7275">Background Data</div>
<div class="t" style="left:22px;top:91px;height:29px;line-height:29px;">Groups</div>
<div class="in" style="left:67px;top:90px;width:247px;height:29px;"></div>
<div class="t" style="left:75.5px;top:91px;height:29px;line-height:29px;color:#b6b9bc">America CVBG</div>
<div class="bt" style="left:314px;top:90px;width:214px;height:29px;"></div>
<div class="arr" style="left:323.5px;top:102.0px"></div>
<div class="t" style="left:412.5px;top:91px;height:29px;line-height:29px;">- Remove</div>
<div class="t" style="left:22px;top:135px;height:29px;line-height:29px;">Group Name</div>
<div class="in" style="left:94px;top:134px;width:179px;height:29px;"></div>
<div class="t" style="left:102px;top:135px;height:29px;line-height:29px;color:#b6b9bc">America CVBG</div>
<div class="t" style="left:283px;top:135px;height:29px;line-height:29px;">Side</div>
<div class="in" style="left:314px;top:134px;width:181px;height:29px;"></div><div class="bt" style="left:495px;top:134px;width:33px;height:29px;"></div><div class="arr" style="left:505.0px;top:146.0px"></div>
<div class="t" style="left:322px;top:135px;height:29px;line-height:29px;color:#b6b9bc">Blue</div>
<div class="t" style="left:22px;top:179px;height:29px;line-height:29px;">Mission type</div>
<div class="in" style="left:95px;top:178px;width:76px;height:29px;"></div><div class="bt" style="left:171px;top:178px;width:33px;height:29px;"></div><div class="arr" style="left:181.0px;top:190.0px"></div>
<div class="t" style="left:103px;top:179px;height:29px;line-height:29px;color:#b6b9bc">No Mission</div>
<div class="t" style="left:210px;top:179px;height:29px;line-height:29px;letter-spacing:-0.5px">% Chance</div>
<div class="in" style="left:267px;top:178px;width:261px;height:29px;"></div>
<div class="t" style="left:275px;top:179px;height:29px;line-height:29px;color:#b6b9bc">100</div>
<div class="t" style="left:22px;top:223px;height:29px;line-height:29px;">Formation</div>
<div class="in" style="left:82px;top:222px;width:16px;height:29px;"></div><div class="bt" style="left:98px;top:222px;width:33px;height:29px;"></div><div class="arr" style="left:108.0px;top:234.0px"></div>
<div class="t" style="left:136px;top:223px;height:29px;line-height:29px;">ROE</div>
<div class="in" style="left:163px;top:222px;width:332px;height:29px;"></div><div class="bt" style="left:495px;top:222px;width:33px;height:29px;"></div><div class="arr" style="left:505.0px;top:234.0px"></div>
<div class="t" style="left:171px;top:223px;height:29px;line-height:29px;color:#b6b9bc">Weapons Tight</div>
<div class="bt" style="left:17px;top:266px;width:511px;height:33px;"></div>
<div class="a" style="left:116px;top:266px;width:1px;height:33px;background:#35393c"></div>
<div class="a" style="left:187px;top:266px;width:1px;height:33px;background:#35393c"></div>
<div class="a" style="left:275px;top:266px;width:1px;height:33px;background:#35393c"></div>
<div class="t" style="left:22px;top:267px;height:33px;line-height:33px;">Formation Editor</div>
<div class="t" style="left:121px;top:267px;height:33px;line-height:33px;">Save Group</div>
<div class="t" style="left:192px;top:267px;height:33px;line-height:33px;">Unit Reference</div>
<div class="t" style="left:359px;top:267px;height:33px;line-height:33px;">Position Locked</div>
<div class="t" style="left:22px;top:315px;height:29px;line-height:29px;">Nation</div>
<div class="in" style="left:62px;top:314px;width:433px;height:29px;"></div><div class="bt" style="left:495px;top:314px;width:33px;height:29px;"></div><div class="arr" style="left:505.0px;top:326.0px"></div>
<div class="t" style="left:70px;top:315px;height:29px;line-height:29px;color:#b6b9bc">USA</div>
<div class="t" style="left:22px;top:359px;height:29px;line-height:29px;">Unit Category</div>
<div class="in" style="left:99px;top:358px;width:396px;height:29px;"></div><div class="bt" style="left:495px;top:358px;width:33px;height:29px;"></div><div class="arr" style="left:505.0px;top:370.0px"></div>
<div class="t" style="left:107px;top:359px;height:29px;line-height:29px;color:#b6b9bc">Vessels</div>
<div class="t" style="left:22px;top:403px;height:29px;line-height:29px;">Unit Type</div>
<div class="in" style="left:76px;top:402px;width:419px;height:29px;"></div><div class="bt" style="left:495px;top:402px;width:33px;height:29px;"></div><div class="arr" style="left:505.0px;top:414.0px"></div>
<div class="t" style="left:84px;top:403px;height:29px;line-height:29px;color:#b6b9bc">America-class (Aircraft Carrier)</div>
<div class="t" style="left:22px;top:447px;height:29px;line-height:29px;">Unit Name</div>
<div class="in" style="left:83px;top:446px;width:412px;height:29px;"></div><div class="bt" style="left:495px;top:446px;width:33px;height:29px;"></div><div class="arr" style="left:505.0px;top:458.0px"></div>
<div class="t" style="left:91px;top:447px;height:29px;line-height:29px;color:#b6b9bc">America CV-66</div>
<div class="bt" style="left:17px;top:490px;width:100px;height:34px;"></div>
<div class="t" style="left:17px;top:491px;height:34px;line-height:34px;width:100px;text-align:center">+ Add Unit</div>
<div class="bt" style="left:132px;top:490px;width:100px;height:34px;"></div>
<div class="t" style="left:132px;top:491px;height:34px;line-height:34px;width:100px;text-align:center">- Remove</div>
<div class="bt" style="left:247px;top:490px;width:281px;height:34px;"></div>
<div class="t" style="left:247px;top:491px;height:34px;line-height:34px;width:281px;text-align:center">Change Selected</div>
<div class="t" style="left:43px;top:542px;height:18px;line-height:18px;">Units</div>
<div class="in" style="left:97px;top:538px;width:431px;height:200px;overflow:hidden">
<div class="a" style="left:0;top:0.5px;width:431px;height:31.5px;background:#c24e3b"></div>
<div class="t" style="left:12px;top:1.5px;height:31.5px;line-height:31.5px;color:#f0e6e4">America CV-66</div>
<div class="t" style="left:12px;top:33.0px;height:31.5px;line-height:31.5px;color:#b6b9bc">Valley Forge CG-50</div>
<div class="t" style="left:12px;top:64.5px;height:31.5px;line-height:31.5px;color:#b6b9bc">Arkansas CGN-41</div>
<div class="t" style="left:12px;top:96.0px;height:31.5px;line-height:31.5px;color:#b6b9bc">Conolly DD-979</div>
<div class="t" style="left:12px;top:127.5px;height:31.5px;line-height:31.5px;color:#b6b9bc">Deyo DD-989</div>
<div class="t" style="left:12px;top:159.0px;height:31.5px;line-height:31.5px;color:#b6b9bc">Seattle AOE-3</div>
<div class="t" style="left:12px;top:190.5px;height:31.5px;line-height:31.5px;color:#b6b9bc">Claude V. Rickets DDG-5</div>
</div>
<div class="a" style="left:97px;top:737px;width:431px;height:2px;overflow:hidden"><div class="t" style="left:12px;top:-3px;height:14px;line-height:14px;color:#8c9093">Claude V. Rickets DDG-5</div></div>
<div class="t" style="left:22px;top:754px;height:29px;line-height:29px;">Loadouts</div>
<div class="in" style="left:77px;top:753px;width:100px;height:29px;"></div><div class="bt" style="left:177px;top:753px;width:33px;height:29px;"></div><div class="arr" style="left:187.0px;top:765.0px"></div>
<div class="t" style="left:221px;top:754px;height:29px;line-height:29px;">Unit Nation</div>
<div class="in" style="left:286px;top:753px;width:209px;height:29px;"></div><div class="bt" style="left:495px;top:753px;width:33px;height:29px;"></div><div class="arr" style="left:505.0px;top:765.0px"></div>
<div class="t" style="left:294px;top:754px;height:29px;line-height:29px;color:#b6b9bc">USA</div>
<div class="t" style="left:22px;top:798px;height:29px;line-height:29px;">Speed</div>
<div class="in" style="left:60px;top:797px;width:117px;height:29px;"></div><div class="bt" style="left:177px;top:797px;width:33px;height:29px;"></div><div class="arr" style="left:187.0px;top:809.0px"></div>
<div class="t" style="left:68px;top:798px;height:29px;line-height:29px;color:#b6b9bc">Ahead 2/3</div>
<div class="bt" style="left:216px;top:797px;width:312px;height:29px;"></div>
<div class="t" style="left:216px;top:798px;height:29px;line-height:29px;width:311px;text-align:center">Open Flight Deck</div>
<div class="t" style="left:340px;top:840px;height:29px;line-height:29px;width:200px;text-align:center">High Value Unit</div>
<div class="a" style="left:502px;top:843px;width:20px;height:21px;background:#c9503f;border-radius:2px"></div>
<svg class="a" style="left:502px;top:843px" width="20" height="21" viewBox="0 0 20 21"><path d="M3.5 10 L8.5 14.8 L16.5 5.8" stroke="#1e1a1a" stroke-width="2.8" fill="none"/></svg>
<div class="t" style="left:340px;top:882px;height:29px;line-height:29px;width:200px;text-align:center">Radars ON</div>
<div class="bt" style="left:502px;top:885px;width:20px;height:20px;border-radius:1px"></div>
<div class="t" style="left:340px;top:926px;height:29px;line-height:29px;width:200px;text-align:center">Active Sonars ON</div>
<div class="bt" style="left:502px;top:929px;width:20px;height:20px;border-radius:1px"></div>
<div class="t" style="left:340px;top:970px;height:29px;line-height:29px;width:200px;text-align:center">Towed Array OUT</div>
<div class="bt" style="left:502px;top:973px;width:20px;height:20px;border-radius:1px"></div>
<div class="t" style="left:22px;top:882px;height:29px;line-height:29px;">Heading</div>
<div class="in" style="left:71px;top:881px;width:139px;height:28px;"></div>
<div class="t" style="left:79px;top:882px;height:28px;line-height:28px;color:#b6b9bc">65</div>
<div class="t" style="left:22px;top:925px;height:29px;line-height:29px;">Skill</div>
<div class="in" style="left:49px;top:924px;width:129px;height:29px;"></div><div class="bt" style="left:178px;top:924px;width:33px;height:29px;"></div><div class="arr" style="left:188.0px;top:936.0px"></div>
<div class="t" style="left:57px;top:925px;height:29px;line-height:29px;color:#b6b9bc">Trained</div>
<div class="t" style="left:22px;top:969px;height:29px;line-height:29px;">Stores</div>
<div class="in" style="left:61px;top:968px;width:116px;height:29px;"></div><div class="bt" style="left:177px;top:968px;width:33px;height:29px;"></div><div class="arr" style="left:187.0px;top:980.0px"></div>
<div class="t" style="left:69px;top:969px;height:29px;line-height:29px;color:#b6b9bc">Full</div>
<div class="in" style="left:72px;top:1012px;width:106px;height:7px;"></div>
<div class="bt" style="left:178px;top:1012px;width:33px;height:7px;"></div>
<div class="bt" style="left:502px;top:1017px;width:20px;height:2px;"></div>
<div class="bt" style="left:33px;top:1041px;width:142px;height:29px;"></div>
<div class="t" style="left:33px;top:1042px;height:29px;line-height:29px;width:142px;text-align:center">Back</div>
<div class="bt" style="left:209px;top:1041px;width:142px;height:29px;"></div>
<div class="t" style="left:209px;top:1042px;height:29px;line-height:29px;width:142px;text-align:center">Save</div>
<div class="bt" style="left:384px;top:1041px;width:142px;height:29px;"></div>
<div class="t" style="left:384px;top:1042px;height:29px;line-height:29px;width:142px;text-align:center">Play</div>
<div class="a" style="left:554px;top:62px;width:6px;height:1018px;background:#2d3033"></div>
<div class="a" style="left:559px;top:0px;width:2px;height:1080px;background:#1f2224"></div>
</div>
</body></html>
